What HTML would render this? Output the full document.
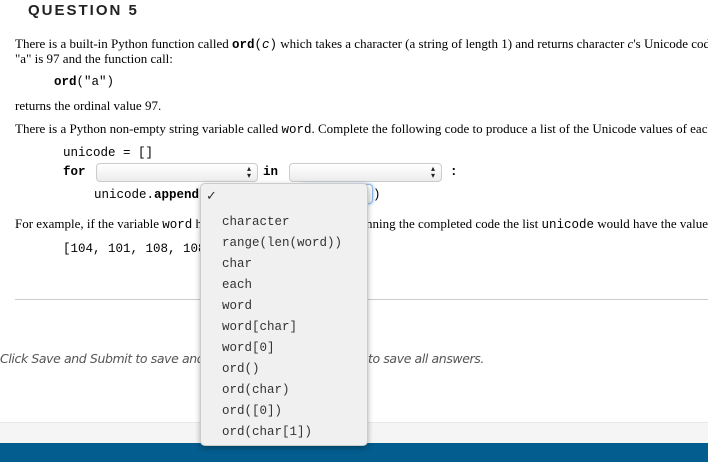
<!DOCTYPE html>
<html><head><style>
body{margin:0;width:708px;height:462px;overflow:hidden;background:#fff;position:relative;font-family:"Liberation Serif",serif;font-size:13px;color:#000}
.a{position:absolute;white-space:nowrap}
.m{font-family:"Liberation Mono",monospace;font-size:12.5px}
.sel{position:absolute;height:17px;border:1px solid #ccc;border-radius:4px;background:linear-gradient(#fff,#ececec)}
.sel:after{content:"▴▾";position:absolute;right:5px;top:1px;font-size:8px;line-height:7px;width:5px;color:#222;word-break:break-all}
.dd{position:absolute;left:200px;top:183px;width:166px;height:261px;background:#f0f0f0;border:1px solid #ccc;border-radius:5px;box-shadow:0 2px 6px rgba(0,0,0,.3)}
.dd div{position:absolute;left:21px;font-family:"Liberation Mono",monospace;font-size:12.5px;color:#333}
.it{font-family:'DejaVu Sans',sans-serif;font-style:italic;font-size:12.5px;color:#555;letter-spacing:-.4px}
</style></head><body>
<div class="a" style="left:28px;top:2px;font-family:'Liberation Sans',sans-serif;font-weight:bold;font-size:15px;letter-spacing:2px;color:#222">QUESTION 5</div>
<div class="a" style="left:15px;top:36px">There is a built-in Python function called <b class="m">ord</b><span class="m">(<i>c</i>)</span> which takes a character (a string of length 1) and returns character <i>c</i>'s Unicode code</div>
<div class="a" style="left:15px;top:51px">"a" is 97 and the function call:</div>
<div class="a m" style="left:54px;top:75px"><b>ord</b>("a")</div>
<div class="a" style="left:15px;top:98px">returns the ordinal value 97.</div>
<div class="a" style="left:15px;top:121px">There is a Python non-empty string variable called <span class="m">word</span>.  Complete the following code to produce a list of the Unicode values of each</div>
<div class="a m" style="left:63px;top:146px">unicode = []</div>
<div class="a m" style="left:63px;top:165px;font-weight:bold">for</div>
<div class="sel" style="left:96px;top:163px;width:160px"></div>
<div class="a m" style="left:263px;top:165px;font-weight:bold">in</div>
<div class="sel" style="left:289px;top:163px;width:151px"></div>
<div class="a m" style="left:450px;top:165px;font-weight:bold">:</div>
<div class="a m" style="left:94px;top:188px">unicode.<b>append</b>(</div>
<div class="sel" style="left:300px;top:184px;width:71px;height:18px;border-color:#8ab8e6;box-shadow:0 0 3px #7fb0e6"></div>
<div class="a m" style="left:373px;top:188px">)</div>
<div class="a" style="left:15px;top:216px">For example, if the variable <span class="m">word</span> h</div>
<div class="a" style="left:366px;top:216px">nning the completed code the list <span class="m">unicode</span> would have the value</div>
<div class="a m" style="left:63px;top:242px">[104, 101, 108, 108, 111]</div>
<div class="a" style="left:15px;top:299px;width:693px;height:1px;background:#ccc"></div>
<div class="a it" style="left:0;top:351px">Click Save and Submit to save and submit.</div>
<div class="a it" style="left:368px;top:351px">to save all answers.</div>
<div class="a" style="left:0;top:422px;width:708px;height:21px;background:#f5f5f5;border-top:1px solid #e8e8e8"></div>
<div class="a" style="left:0;top:443px;width:708px;height:19px;background:#035d8e"></div>
<div class="dd">
<div style="top:5px;left:5px;font-family:'DejaVu Sans',sans-serif;font-size:13px">✓</div>
<div style="top:31px">character</div>
<div style="top:52px">range(len(word))</div>
<div style="top:73px">char</div>
<div style="top:94px">each</div>
<div style="top:115px">word</div>
<div style="top:136px">word[char]</div>
<div style="top:157px">word[0]</div>
<div style="top:178px">ord()</div>
<div style="top:199px">ord(char)</div>
<div style="top:220px">ord([0])</div>
<div style="top:241px">ord(char[1])</div>
</div>
</body></html>
